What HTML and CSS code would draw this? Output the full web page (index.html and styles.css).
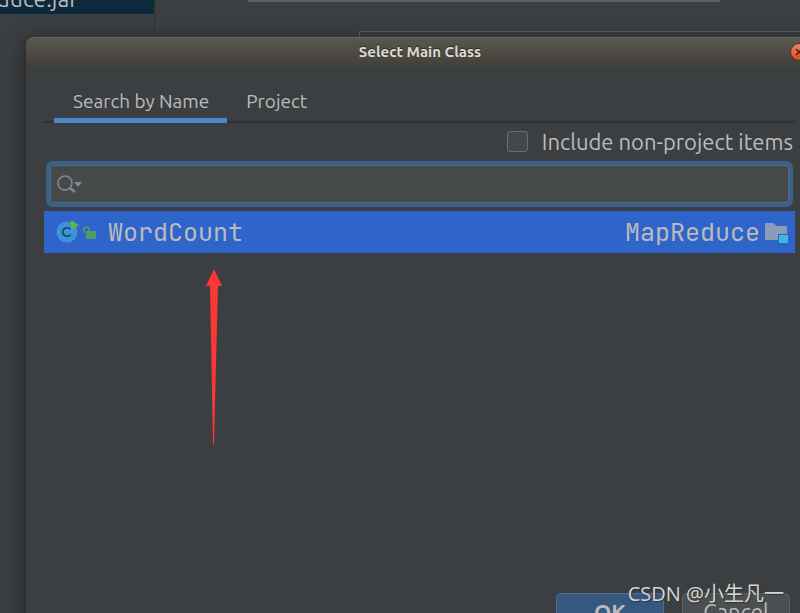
FILE: index.html
```html
<!DOCTYPE html>
<html lang="en">
<head>
	<meta charset="UTF-8">
	<title>Select Main Class</title>
	<link rel="stylesheet" href="styles.css">
</head>
<body>
	<div class="app">
		<div class="sidebar">
			<div class="file"><span>educe.jar</span></div>
		</div>
		<div class="form">
			<div class="field"></div>
			<div class="field-next"></div>
		</div>
	</div>

	<div class="dialog">
		<div class="titlebar">
			<h1>Select Main Class</h1>
			<button class="close" aria-label="Close">
				<svg width="18" height="18" viewBox="0 0 18 18">
					<defs>
						<linearGradient id="orange" x1="0" y1="0" x2="0" y2="1">
							<stop offset="0" stop-color="#f58261"/>
							<stop offset="1" stop-color="#dd4814"/>
						</linearGradient>
					</defs>
					<circle cx="9" cy="9" r="8.5" fill="url(#orange)" stroke="#35332e"/>
					<path d="M6 6l6 6M12 6l-6 6" stroke="#3a2a20" stroke-width="1.5"/>
				</svg>
			</button>
		</div>
		<div class="content">
			<div class="tabs">
				<button class="tab active">Search by Name</button>
				<button class="tab">Project</button>
			</div>
			<div class="option">
				<input type="checkbox" id="nonproject">
				<label for="nonproject">Include non-project items</label>
			</div>
			<div class="search">
				<svg width="26" height="20" viewBox="0 0 26 20" fill="none">
					<circle cx="8" cy="9" r="7" stroke="#808a90" stroke-width="1.6"/>
					<path d="M13 14l5 4" stroke="#808a90" stroke-width="2.4"/>
					<path d="M17 8h8l-4 5z" fill="#808a90"/>
				</svg>
				<input type="text" aria-label="Search by name">
			</div>
			<div class="result">
				<svg width="23" height="24" viewBox="0 0 23 24">
					<circle cx="11" cy="12" r="10.5" fill="#3a94d8"/>
					<path d="M14.500 9.200a4.500 4.200 0 1 0 0 5.600" fill="none" stroke="#23435c" stroke-width="1.8"/>
					<path d="M15 0l8 5-8 5z" fill="#62b543"/>
				</svg>
				<svg class="lock" width="13" height="13" viewBox="0 0 13 13">
					<path d="M1 7V3.500a2.500 2.500 0 0 1 5 0V6" fill="none" stroke="#529c6c" stroke-width="1.500"/>
					<path d="M3 5h10v8H3z" fill="#529c6c"/>
				</svg>
				<span class="name">WordCount</span>
				<span class="module">MapReduce</span>
				<svg width="24" height="22" viewBox="0 0 24 22">
					<path d="M0 2h8l4 3h10v8h-9v6H0z" fill="#8a9cb8"/>
					<path d="M14 14h9v9h-9z" fill="#40b6e0"/>
				</svg>
			</div>
			<div class="buttons">
				<button class="btn ok">OK</button>
				<button class="btn">Cancel</button>
			</div>
		</div>
	</div>

	<svg class="arrow" width="16" height="176" viewBox="0 0 16 176">
		<path d="M8 0l8 17h-4L8 175H7L4 17H0z" fill="#fd3636"/>
	</svg>
	<div class="watermark">CSDN @小生凡一</div>
</body>
</html>
```
FILE: styles.css
```css
*{
	box-sizing: border-box;
	margin: 0;
	padding: 0;
}
body{
	position: relative;
	height: 100vh;
	overflow: hidden;
	background: #3c3f41;
	color: #bbbbbb;
	font-family: Ubuntu, "Noto Sans", sans-serif;
	font-size: 19px;
}
button, input{
	font: inherit;
	color: inherit;
}
button{
	border: 0;
	background: none;
}
/* window behind */
.app{
	display: flex;
	height: 100%;
	overflow: hidden;
}
.sidebar{
	width: 155px;
	border-right: 1px solid #323232;
}
.file{
	display: flex;
	align-items: flex-end;
	justify-content: flex-end;
	height: 14px;
	padding: 0 76px 3px 0;
	background: #0d293e;
	font-size: 23px;
	line-height: 24px;
}
.form{
	flex: 1;
	padding-left: 93px;
}
.field{
	height: 2px;
	margin-right: 80px;
	background: #5e6060;
}
.field-next{
	height: 40px;
	margin: 29px 0 0 111px;
	border: 1px solid #5e6060;
	border-right: 0;
}
/* dialog, runs past the right and bottom edges */
.dialog{
	position: absolute;
	top: 37px;
	left: 26px;
	right: -14px;
	bottom: -38px;
	display: flex;
	flex-direction: column;
	border-radius: 8px 8px 0 0;
	background: #3c3f41;
	box-shadow: 0 4px 20px rgba(0,0,0,0.5);
}
.titlebar{
	display: grid;
	grid-template-columns: 24px 1fr 24px;
	align-items: center;
	height: 30px;
	padding-bottom: 2px;
	border-top: 1px solid #69665a;
	border-radius: 8px 8px 0 0;
	background: linear-gradient(#5a574e, #403f39);
}
.titlebar h1{
	grid-column: 2;
	text-align: center;
	color: #dfdbd2;
	font-size: 15px;
	text-shadow: 0 -1px 1px #2b2a26;
}
.close{
	display: flex;
}
.content{
	flex: 1;
	display: flex;
	flex-direction: column;
	padding: 0 19px 20px 18px;
}
.tabs{
	display: flex;
	height: 56px;
	padding-left: 10px;
	box-shadow: inset 0 -2px #323232;
}
.tab{
	padding: 16px 18px 0 19px;
	border-bottom: 5px solid transparent;
}
.tab.active{
	border-color: #4a88c7;
}
.option{
	display: flex;
	align-items: center;
	justify-content: flex-end;
	gap: 14px;
	height: 38px;
	padding: 0 2px 2px 0;
	font-size: 22px;
}
.option input{
	appearance: none;
	width: 21px;
	height: 21px;
	border: 1px solid #6b6b6b;
	border-radius: 3px;
	background: #43494a;
}
.search{
	display: flex;
	align-items: center;
	height: 46px;
	margin: 0 2px 4px;
	padding: 0 7px;
	border: 4px solid #3d6185;
	border-radius: 7px;
	background: #45494a;
	box-shadow: inset 0 0 0 1px #466d94;
}
.search input{
	flex: 1;
	border: 0;
	outline: 0;
	background: none;
}
.result{
	display: flex;
	align-items: center;
	height: 42px;
	padding: 0 6px 0 12px;
	background: #2f65ca;
	font-family: "JetBrains Mono", "DejaVu Sans Mono", monospace;
	font-size: 25px;
}
.lock{
	margin: 0 12px 0 4px;
}
.module{
	margin-left: auto;
	margin-right: 5px;
}
.buttons{
	display: flex;
	justify-content: flex-end;
	gap: 18px;
	margin-top: auto;
	padding-right: 5px;
}
.btn{
	width: 108px;
	height: 38px;
	border: 1px solid #5e6060;
	border-radius: 5px;
	background: #4c5052;
	font-size: 22px;
	line-height: 36px;
}
.ok{
	border-color: #4c708c;
	background: #365880;
	font-weight: bold;
}
.arrow{
	position: absolute;
	top: 269px;
	left: 206px;
}
.watermark{
	position: absolute;
	right: 16px;
	bottom: 5px;
	color: #d5d5d5;
	font-family: "Open Sans", "Noto Sans CJK SC", sans-serif;
	font-size: 20px;
	line-height: 29px;
	text-shadow: 1px 1px 1px #333333;
}
```
